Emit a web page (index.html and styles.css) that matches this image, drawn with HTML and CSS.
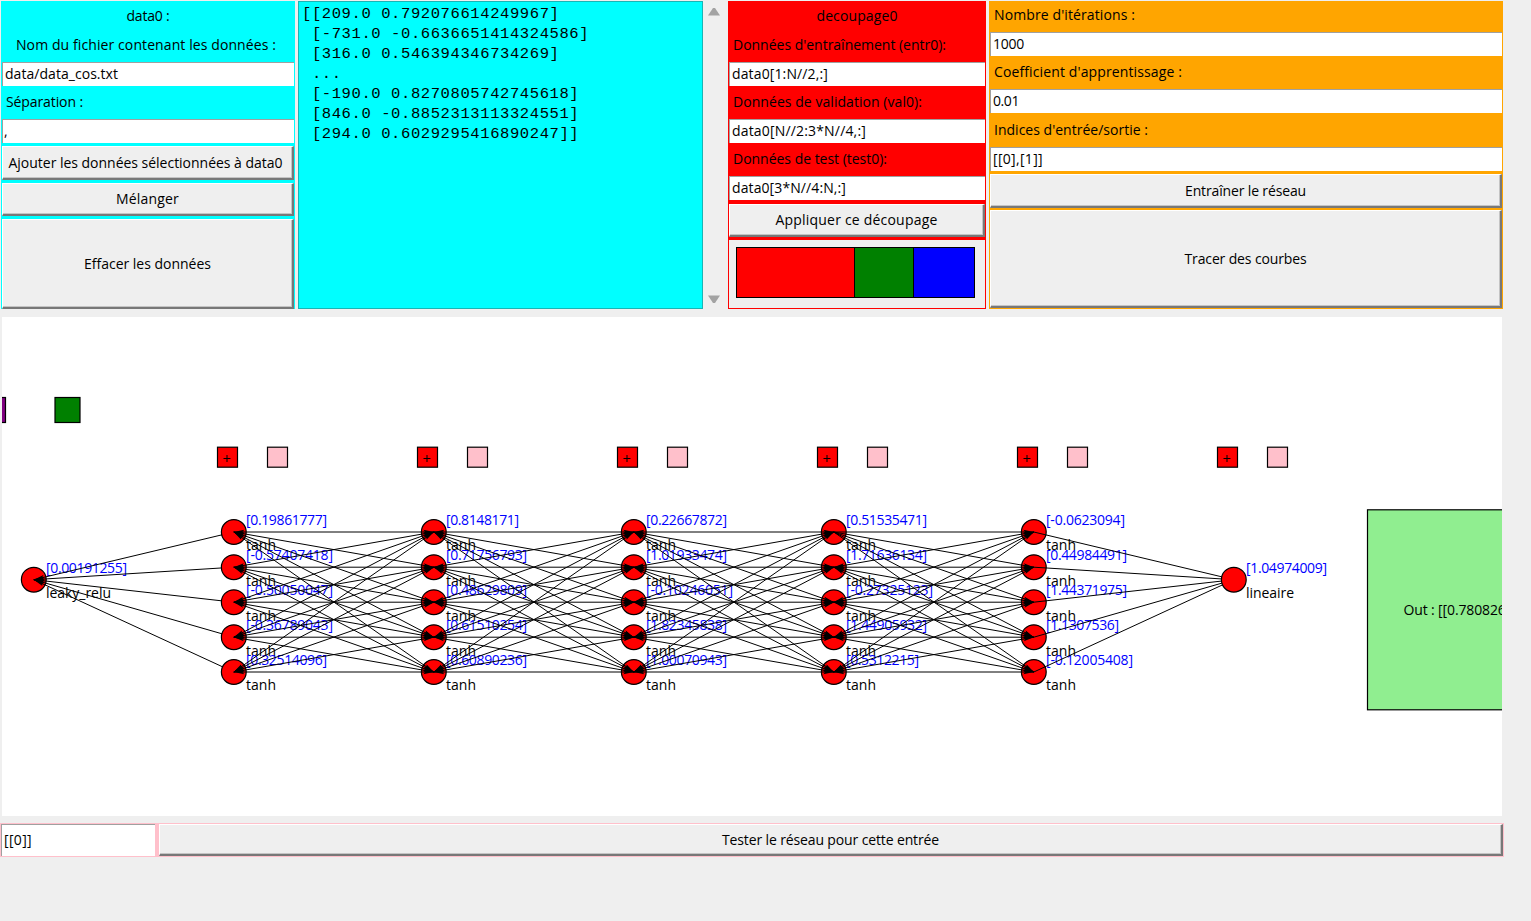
FILE: index.html
```html
<!DOCTYPE html>
<html lang="fr">
<head>
<meta charset="utf-8">
<title>Réseau de neurones</title>
<link rel="stylesheet" href="styles.css">
</head>
<body>
<main class="app">
  <section class="top">
    <div class="panel data">
      <div class="label center"><span data-w="43">data0 :</span></div>
      <div class="label center wide"><span data-w="260">Nom du fichier contenant les données :</span></div>
      <div class="entry"><span data-w="113">data/data_cos.txt</span></div>
      <div class="label"><span data-w="77">Séparation :</span></div>
      <div class="entry comma"><span>,</span></div>
      <div class="button wide"><span data-w="274">Ajouter les données sélectionnées à data0</span></div>
      <div class="button"><span data-w="63">Mélanger</span></div>
      <div class="button"><span data-w="127">Effacer les données</span></div>
    </div>
    <pre class="output">[[209.0 0.792076614249967]
 [-731.0 -0.6636651414324586]
 [316.0 0.546394346734269]
 ...
 [-190.0 0.8270805742745618]
 [846.0 -0.8852313113324551]
 [294.0 0.6029295416890247]]</pre>
    <div class="scroll">
      <svg width="12" height="9" viewBox="0 0 12 9"><path d="M5 0h2l5 7.5H0z" fill="#a3a3a3"/></svg>
      <svg width="12" height="9" viewBox="0 0 12 9"><path d="M0 0.5h12l-5 7.5H5z" fill="#a3a3a3"/></svg>
    </div>
    <div class="panel split">
      <div class="label center"><span data-w="81">decoupage0</span></div>
      <div class="label"><span data-w="213">Données d'entraînement (entr0):</span></div>
      <div class="entry"><span data-w="96">data0[1:N//2,:]</span></div>
      <div class="label"><span data-w="189">Données de validation (val0):</span></div>
      <div class="entry"><span data-w="134">data0[N//2:3*N//4,:]</span></div>
      <div class="label"><span data-w="154">Données de test (test0):</span></div>
      <div class="entry"><span data-w="114">data0[3*N//4:N,:]</span></div>
      <div class="button"><span data-w="162">Appliquer ce découpage</span></div>
      <div class="shares"><i class="train"></i><i class="valid"></i><i class="test"></i></div>
    </div>
    <div class="panel learn">
      <div class="label"><span data-w="141">Nombre d'itérations :</span></div>
      <div class="entry"><span data-w="31">1000</span></div>
      <div class="label"><span data-w="188">Coefficient d'apprentissage :</span></div>
      <div class="entry"><span data-w="26">0.01</span></div>
      <div class="label"><span data-w="154">Indices d'entrée/sortie :</span></div>
      <div class="entry"><span data-w="50">[[0],[1]]</span></div>
      <div class="button"><span data-w="121">Entraîner le réseau</span></div>
      <div class="button"><span data-w="122">Tracer des courbes</span></div>
    </div>
  </section>
  <svg class="network" id="network" width="1500" height="499" viewBox="2 317 1500 499"></svg>
  <section class="tester">
    <div class="entry"><span data-w="28">[[0]]</span></div>
    <div class="button"><span data-w="217">Tester le réseau pour cette entrée</span></div>
  </section>
</main>
<script src="app.js"></script>
</body>
</html>
```
FILE: styles.css
```css
* { box-sizing: border-box; }
body {
  margin: 0;
  background: #efefef;
  color: #000;
  font: 14px/20px "Open Sans", "Noto Sans", sans-serif;
  overflow: hidden;
}
.app { display: flex; flex-direction: column; width: 1504px; }
.top {
  display: grid;
  grid-template-columns: 294px 405px 18px 258px 514px;
  column-gap: 0;
  height: 309px;
  padding-top: 1px;
  padding-left: 1px;
}
.panel { display: grid; align-content: start; padding: 0 1px; min-width: 0; }
.data { background: #00ffff; grid-template-rows: 30px 31px 24px 33px 24px 3px 34px 3px 33px 3px 90px; }
.data .button:nth-child(6) { grid-row: 7; }
.data .button:nth-child(7) { grid-row: 9; }
.data .button:nth-child(8) { grid-row: 11; }
.output {
  margin: 0 0 0 3px;
  width: 405px;
  padding: 2px 3px;
  border: 1px solid #19b5b5;
  background: #00ffff;
  font: 15.5px/20px "Liberation Mono", monospace;
  letter-spacing: 0.6px;
}
.scroll {
  display: flex;
  flex-direction: column;
  justify-content: space-between;
  margin-left: 8px;
  padding: 7px 0 5px;
}
.split { margin-left: 10px; width: 258px; background: #f00; grid-template-rows: 30px 31px 24px 33px 24px 33px 24px 4px 33px 3px 68px; }
.split .button { grid-row: 9; }
.shares { grid-row: 11; display: flex; padding: 7px 0 0 7px; background: #efefef; }
.shares i { height: 51px; border: 1px solid #000; margin-right: -1px; }
.train { width: 119px; background: #f00; }
.valid { width: 60px; background: #008000; }
.test { width: 62px; background: #00f; }
.learn { margin-left: 13px; width: 514px; background: #ffa500; grid-template-rows: 31px 24px 33px 24px 34px 24px 3px 34px 2px 98px; }
.learn .button:nth-child(7) { grid-row: 8; }
.learn .button:nth-child(8) { grid-row: 10; }
.label { display: flex; align-items: center; padding: 0 4px 1px; white-space: nowrap; }
.label:nth-child(2) { padding-bottom: 3px; }
.learn .label:first-child { padding-bottom: 3px; }
.center { justify-content: center; }
.center.wide { padding-right: 8px; }
.entry {
  display: flex;
  align-items: center;
  padding: 0 0 2px 2px;
  background: #fff;
  border-top: 1px solid #a0a0a0;
  border-left: 1px solid #a0a0a0;
  white-space: nowrap;
}
.comma { padding-left: 1px; }
.button {
  display: flex;
  align-items: center;
  justify-content: center;
  background: #efefef;
  border: solid;
  border-width: 1px 2px 2px 1px;
  border-color: #fff #787878 #787878 #fff;
  box-shadow: inset -1px -1px #c4c4c4;
  white-space: nowrap;
}
.button.wide { padding-right: 4px; }
.network { display: block; margin: 8px 0 7px 2px; background: #fff; font-size: 14px; }
.network .edge { stroke: #000; stroke-width: 1; }
.network .value { fill: #00f; }
.network .shape { stroke: #000; stroke-width: 1.2; }
.network .plus { stroke: #000; stroke-width: 1; }
.tester {
  display: grid;
  grid-template-columns: 154px 1344px;
  column-gap: 4px;
  height: 34px;
  padding: 1px 0 1px 1px;
  background: #ffc0cb;
}
```
FILE: app.js
```js
document.querySelectorAll("[data-w]").forEach(function (el) {
  var n = el.textContent.length;
  var gap = (Number(el.dataset.w) - el.getBoundingClientRect().width) / n;
  el.style.letterSpacing = gap.toFixed(3) + "px";
});

var svg = document.getElementById("network");
function add(tag, attrs, text) {
  var el = document.createElementNS("http://www.w3.org/2000/svg", tag);
  for (var k in attrs) el.setAttribute(k, attrs[k]);
  if (text) el.textContent = text;
  svg.appendChild(el);
}
function box(x, y, w, h, fill) {
  add("rect", { x: x, y: y, width: w, height: h, fill: fill, "class": "shape" });
}
function head(x, y, tx, ty) {
  var d = Math.hypot(tx - x, ty - y), ux = (tx - x) / d, uy = (ty - y) / d;
  var p = function (a, b) { return (x + ux * a - uy * b) + "," + (y + uy * a + ux * b); };
  add("polygon", { points: [p(0, 0), p(10.5, 2.2), p(8.5, 0), p(10.5, -2.2)].join(" "), fill: "#000" });
}

var ys = [532, 567.2, 602.2, 637.2, 672];
var layers = [
  { name: "leaky_relu", w: 65, ys: [579.7], values: ["[0.00191255]"] },
  { name: "tanh", w: 30, ys: ys, values: ["[0.19861777]", "[-0.57407418]", "[-0.50050047]", "[-0.36789043]", "[0.32514096]"] },
  { name: "tanh", w: 30, ys: ys, values: ["[0.8148171]", "[0.71756793]", "[0.48629809]", "[0.61510254]", "[0.60890236]"] },
  { name: "tanh", w: 30, ys: ys, values: ["[0.22667872]", "[1.01933474]", "[-0.10246051]", "[1.82345838]", "[1.00070943]"] },
  { name: "tanh", w: 30, ys: ys, values: ["[0.51535471]", "[1.71636134]", "[-0.27325123]", "[1.44905932]", "[0.5312215]"] },
  { name: "tanh", w: 30, ys: ys, values: ["[-0.0623094]", "[0.44984491]", "[1.44371975]", "[1.1307536]", "[-0.12005408]"] },
  { name: "lineaire", w: 48, ys: [579.7], values: ["[1.04974009]"] }
];
var xOf = function (i) { return 33.8 + 200 * i; };
function circles(i) {
  layers[i].ys.forEach(function (y) {
    add("circle", { cx: xOf(i), cy: y, r: 12.4, fill: "#f00", "class": "shape" });
  });
}
function edges(i) {
  layers[i].ys.forEach(function (a, k) {
    layers[i + 1].ys.forEach(function (b) {
      var x1 = xOf(i), x2 = xOf(i + 1);
      add("line", { x1: x1, y1: a, x2: x2, y2: b, "class": "edge" });
      if (i < 5 && !(i === 4 && k === 0)) head(x1, a, x2, b);
      if (i > 0 && i < 5) head(x2, b, x1, a);
    });
  });
}

box(-19.5, 397.5, 25, 25, "#800080");
box(55, 397.5, 25, 25, "#008000");
for (var c = 1; c < 7; c++) {
  var x = 17.5 + 200 * c;
  box(x, 447.2, 20, 20, "#f00");
  box(x + 50, 447.2, 20, 20, "#ffc0cb");
  add("path", { d: "M" + (x + 6) + " 458.5h7m-3.5 -3.5v7", "class": "plus" });
}
layers.forEach(function (layer, i) {
  layer.ys.forEach(function (y, k) {
    var v = layer.values[k];
    var w = 81 + (v.length - 12) * 8 - (v[1] === "-" ? 2 : 0);
    add("text", { x: xOf(i) + 12.2, y: y - 7, textLength: w, "class": "value" }, v);
    add("text", { x: xOf(i) + 12.2, y: y + 18.3, textLength: layer.w }, layer.name);
  });
});
circles(0);
edges(0);
for (var i = 1; i < 6; i++) circles(i);
for (i = 1; i < 6; i++) edges(i);
circles(6);
box(1367.5, 509.8, 200, 200, "#90ee90");
add("text", { x: 1403.5, y: 615, textLength: 127 }, "Out : [[0.78082653]]");
```
